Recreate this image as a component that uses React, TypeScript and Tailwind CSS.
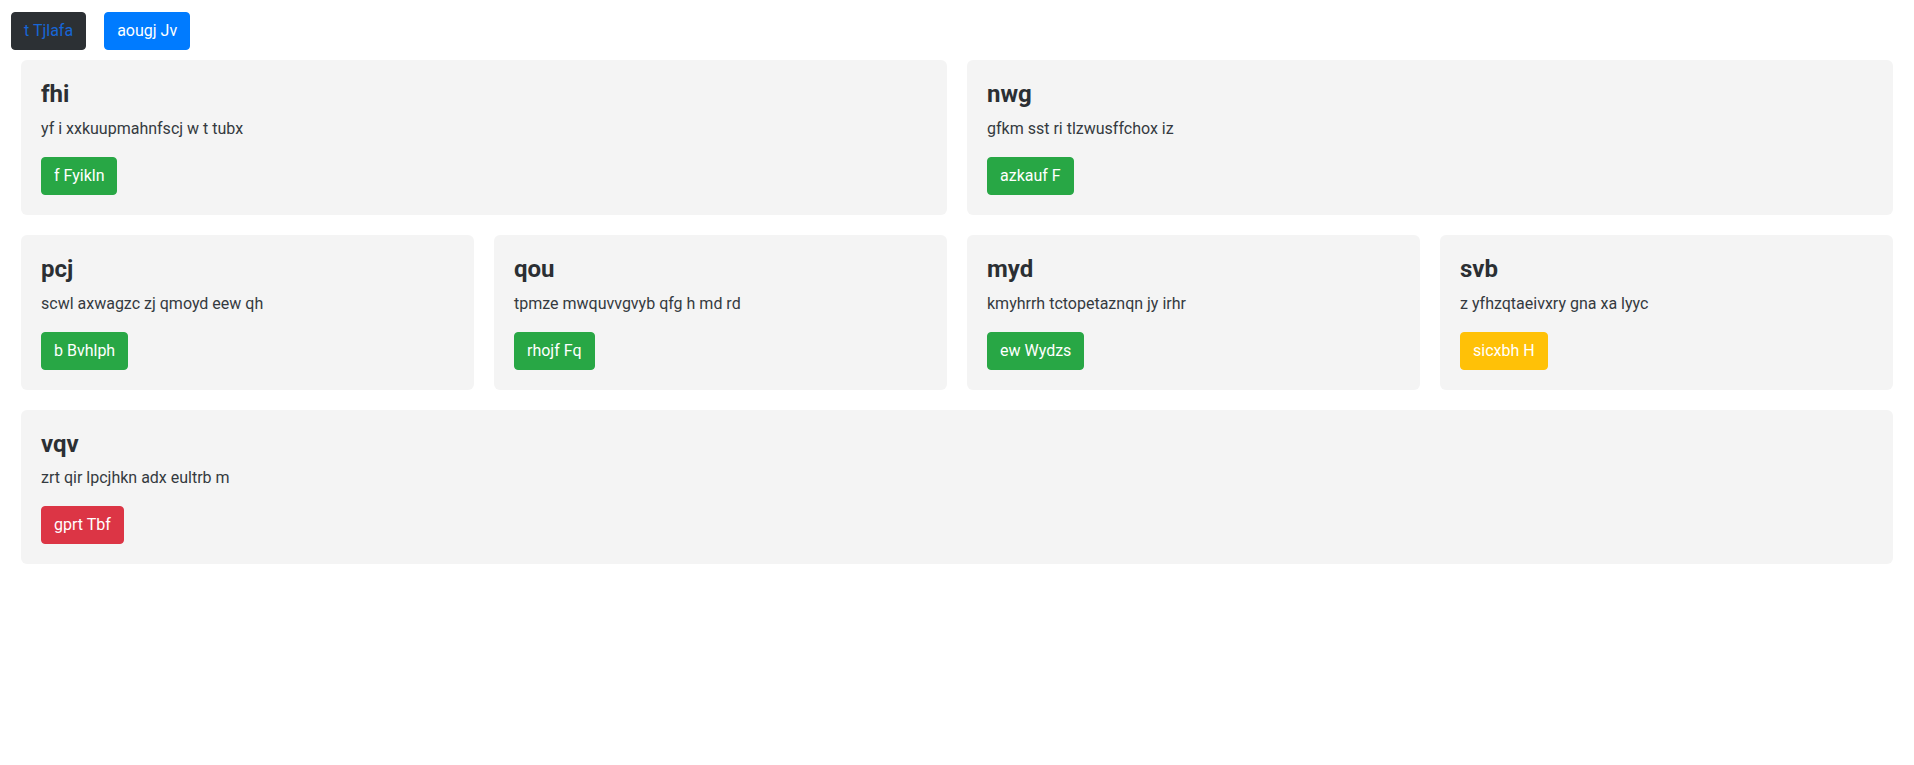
const font = { fontFamily: '"Segoe UI", Roboto, "Open Sans", sans-serif' };

type Card = { title: string; text: string; action: string; tone: "green" | "yellow" | "red" };

const tones: Record<Card["tone"], string> = {
  green: "bg-[#28a745] border-[#28a745]",
  yellow: "bg-[#ffc107] border-[#ffc107]",
  red: "bg-[#dc3545] border-[#dc3545]",
};

const rows: Card[][] = [
  [
    { title: "fhi", text: "yf i xxkuupmahnfscj w t tubx", action: "f Fyikln", tone: "green" },
    { title: "nwg", text: "gfkm sst ri tlzwusffchox iz", action: "azkauf F", tone: "green" },
  ],
  [
    { title: "pcj", text: "scwl axwagzc zj qmoyd eew qh", action: "b Bvhlph", tone: "green" },
    { title: "qou", text: "tpmze mwquvvgvyb qfg h md rd", action: "rhojf Fq", tone: "green" },
    { title: "myd", text: "kmyhrrh tctopetaznqn jy irhr", action: "ew Wydzs", tone: "green" },
    { title: "svb", text: "z yfhzqtaeivxry gna xa lyyc", action: "sicxbh H", tone: "yellow" },
  ],
  [{ title: "vqv", text: "zrt qir lpcjhkn adx eultrb m", action: "gprt Tbf", tone: "red" }],
];

const cols: Record<number, string> = {
  1: "grid-cols-1",
  2: "grid-cols-2",
  4: "grid-cols-4",
};

function InfoCard({ card }: { card: Card }) {
  return (
    <div className="rounded-md bg-[#f4f4f4] p-5">
      <h4 className="mb-2 text-2xl leading-[1.2] font-bold text-[#2b2f33]">{card.title}</h4>
      <p className="mb-4 text-base leading-6 text-[#343a40]">{card.text}</p>
      <button
        className={`rounded border px-3 py-1.5 text-base leading-6 text-white ${tones[card.tone]}`}
      >
        {card.action}
      </button>
    </div>
  );
}

export default function App() {
  return (
    <div className="min-h-screen bg-white px-[11px] pt-3" style={font}>
      <div className="flex gap-[18px]">
        <button className="rounded border border-[#2c3034] bg-[#2c3034] px-3 py-1.5 text-base leading-6 text-[#1766d6]">
          t Tjlafa
        </button>
        <button className="rounded border border-[#007bff] bg-[#007bff] px-3 py-1.5 text-base leading-6 text-white">
          aougj Jv
        </button>
      </div>
      <div className="mt-2.5 flex flex-col gap-5 px-2.5">
        {rows.map((row, i) => (
          <div key={i} className={`grid gap-5 ${cols[row.length]}`}>
            {row.map((card) => (
              <InfoCard key={card.title} card={card} />
            ))}
          </div>
        ))}
      </div>
    </div>
  );
}
